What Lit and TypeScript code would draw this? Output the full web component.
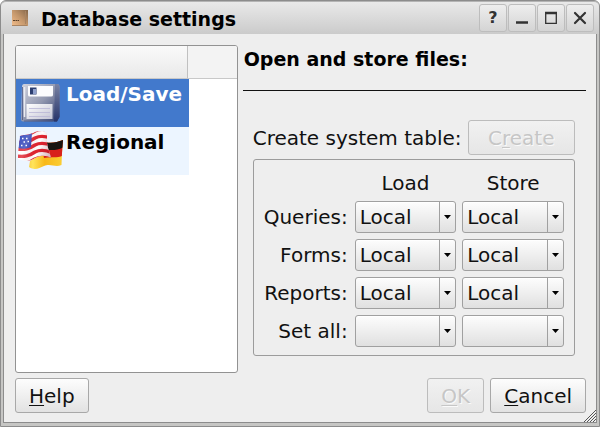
import { LitElement, html, css, svg, nothing } from "lit";
import { customElement, property, state } from "lit/decorators.js";
import { classMap } from "lit/directives/class-map.js";

const floppyIcon = html`
  <svg class="icon" viewBox="0 0 48 48" aria-hidden="true">
    <defs>
      <linearGradient id="body" x1="0" y1="0" x2="1" y2="1">
        <stop offset="0" stop-color="#d2d5e0" />
        <stop offset="0.5" stop-color="#9298b0" />
        <stop offset="1" stop-color="#2b396b" />
      </linearGradient>
      <linearGradient id="label" x1="0" y1="0" x2="1" y2="1">
        <stop offset="0" stop-color="#ffffff" />
        <stop offset="1" stop-color="#c3c4d4" />
      </linearGradient>
      <linearGradient id="side" x1="0" y1="0" x2="0" y2="1">
        <stop offset="0" stop-color="#7a83a4" />
        <stop offset="1" stop-color="#26346a" />
      </linearGradient>
    </defs>
    <path d="M8 5H41Q43.500 5 43.500 8V38L41 42.500H7Q5 42.500 5 40L6 7Q6.500 5 8 5Z" fill="url(#body)" />
    <path d="M39 5H41Q43.500 5 43.500 8V38L41 42.500H38Z" fill="url(#side)" />
    <path d="M6.500 8V41M8 42H37" stroke="#4b5884" stroke-width="0.800" fill="none" />
    <path d="M8.500 8V38" stroke="#e9ebf2" stroke-width="1.500" fill="none" />
    <path d="M12 7H37V16Q37 17.500 35 17.500H14Q12 17.500 12 16Z" fill="#fcfcfe" />
    <path d="M14 8.500H20.500V15.500H14Z" fill="#2c3e70" />
    <path d="M17 10H20V15H17Z" fill="#8fa0cc" />
    <path d="M10.500 25H36.500V40H10.500Z" fill="url(#label)" />
    <path d="M13 29.500H34M13 33.500H34M13 37.500H34" stroke="#b9b6d6" stroke-width="0.800" fill="none" />
  </svg>
`;

const flagsIcon = html`
  <svg class="icon" viewBox="0 0 48 48" aria-hidden="true">
    <defs>
      <linearGradient id="gold" x1="0" y1="0" x2="1" y2="0">
        <stop offset="0" stop-color="#e2900c" />
        <stop offset="0.35" stop-color="#ffe45a" />
        <stop offset="0.6" stop-color="#f8b818" />
        <stop offset="1" stop-color="#fbd038" />
      </linearGradient>
      <linearGradient id="shine" x1="0" y1="0" x2="1" y2="0.300">
        <stop offset="0" stop-color="#ffffff" stop-opacity="0" />
        <stop offset="0.350" stop-color="#ffffff" stop-opacity="0.200" />
        <stop offset="0.650" stop-color="#7a0010" stop-opacity="0" />
        <stop offset="1" stop-color="#7a0010" stop-opacity="0.300" />
      </linearGradient>
      <clipPath id="germany">
        <path d="M29 15C36 17 41 15 47 13L46 26L45.500 38C39 41 35 36 28 39C23 41 19 44 13 40L14 34L27 26Z" />
      </clipPath>
      <clipPath id="usa">
        <path d="M4 9C11 7 14 8 19 5C24 3 28 4 31 6L31 16C32 22 34 26 35 31C30 28 25 28 19 31C13 35 8 34 2 32C2 26 3 17 4 9Z" />
      </clipPath>
    </defs>
    <g clip-path="url(#germany)">
      <rect y="10" width="48" height="36" fill="url(#gold)" />
      <path d="M24 10H48V28C41 32 35 29 28 31Z" fill="#d8211b" />
      <path d="M26 10H48V20C42 24 36 23 28 23Z" fill="#171310" />
    </g>
    <g clip-path="url(#usa)">
      <rect width="40" height="38" fill="#ffffff" />
      ${[2, 9, 16, 23, 30].map(
        (y) => svg`<path d="M0 ${y + 6}C9 ${y + 7} 13 ${y + 6} 19 ${y + 2}C25 ${y - 1} 30 ${y} 37 ${y + 3}" stroke="#df2430" stroke-width="3.400" fill="none" />`,
      )}
      <path d="M4 8C9 8 12 8 16 6L15 20C11 22 7 22 2 21Z" fill="#2f43ba" />
      <path d="M6 11.500H7.500M10 11.500H11.500M7.500 15H9M11.500 14.500H13M5 18.500H6.500M9.500 18.500H11" stroke="#ffffff" stroke-width="1.500" fill="none" />
      <rect width="40" height="38" fill="url(#shine)" />
    </g>
  </svg>
`;

@customElement("local-select")
class LocalSelect extends LitElement {
  @property() label = "";
  @property() value = "";

  static styles = css`
    :host {
      display: grid;
    }
    select,
    svg {
      grid-area: 1 / 1;
    }
    select {
      appearance: none;
      width: 100%;
      height: 32px;
      margin: 0;
      padding: 0 20px 0 4px;
      border: 1px solid #a0a0a0;
      border-radius: 3px;
      background: linear-gradient(#fdfdfd, #e0e0e0);
      box-shadow: inset 0 1px #ffffff;
      font: 20px "DejaVu Sans", sans-serif;
      color: #111;
    }
    svg {
      justify-self: end;
      width: 17px;
      height: 32px;
      pointer-events: none;
    }
  `;

  render() {
    return html`
      <select aria-label=${this.label}>
        ${this.value ? nothing : html`<option selected></option>`}
        <option ?selected=${this.value === "Local"}>Local</option>
        <option>Server</option>
      </select>
      <svg viewBox="0 0 17 32" aria-hidden="true">
        <path d="M0.500 1V31" stroke="#a0a0a0" />
        <path d="M5 14H12L8.500 18Z" fill="#000" />
      </svg>
    `;
  }
}

@customElement("app-root")
class DatabaseSettings extends LitElement {
  @state() private page = 0;

  private pages = [
    { name: "Load/Save", icon: floppyIcon },
    { name: "Regional", icon: flagsIcon },
  ];

  private rows = [
    { name: "Queries", value: "Local" },
    { name: "Forms", value: "Local" },
    { name: "Reports", value: "Local" },
    { name: "Set all", value: "" },
  ];

  static styles = css`
    :host {
      display: block;
      font: 20px/24px "DejaVu Sans", sans-serif;
      color: #111;
    }
    * {
      box-sizing: border-box;
    }
    button {
      margin: 0;
      font: inherit;
      color: inherit;
    }
    .window {
      display: flex;
      flex-direction: column;
      min-height: 100vh;
      border: 1px solid #8c8c8c;
      border-radius: 6px 6px 0 0;
      background: #c6c6c4;
    }
    .titlebar {
      display: flex;
      align-items: center;
      height: 33px;
      padding: 0 5px 0 11px;
      border-top: 1px solid #b4b4b4;
      border-radius: 5px 5px 0 0;
      background: linear-gradient(#e9e9e9, #cbcbcb);
    }
    .app-icon {
      width: 16px;
      height: 16px;
    }
    .title {
      flex: 1;
      margin: 0 0 0 13px;
      padding-top: 2px;
      font-size: 19px;
      color: #000;
    }
    .controls {
      display: flex;
      gap: 1px;
    }
    .control {
      display: grid;
      place-items: center;
      width: 28px;
      height: 28px;
      padding: 0;
      border: 1px solid #bdbdbd;
      border-radius: 3px;
      background: linear-gradient(#eeeeee, #d4d4d4);
      font-size: 16px;
      font-weight: bold;
      color: #333;
    }
    .control svg {
      width: 16px;
      height: 16px;
      fill: none;
      stroke: #333;
    }
    .body {
      flex: 1;
      display: flex;
      flex-direction: column;
      gap: 5px;
      margin: 0 2px 3px;
      padding: 11px 10px 9px 11px;
      border: solid #8c8c8c;
      border-width: 0 1px 1px;
      background: #eeeeee;
      position: relative;
    }
    .main {
      flex: 1;
      display: flex;
      gap: 5px;
    }
    .pages {
      flex: 0 0 39%;
      border: 1px solid #929292;
      border-radius: 3px;
      background: #fff;
      overflow: hidden;
    }
    .pages-head {
      height: 33px;
      border-bottom: 1px solid #c8c8c8;
      background: #f3f3f3;
    }
    .column-head {
      width: 172px;
      height: 32px;
      border-right: 1px solid #c0c0c0;
      background: linear-gradient(#fafafa, #e9e9e9);
    }
    .page {
      display: flex;
      gap: 2px;
      width: 173px;
      height: 48px;
      padding: 0;
      border: 0;
      background: #ecf5ff;
      font-weight: bold;
      color: #000;
      white-space: nowrap;
    }
    .page-name {
      padding-top: 3px;
    }
    .page.current {
      background: #4279cc;
      color: #fff;
    }
    .icon {
      flex: none;
      width: 48px;
      height: 48px;
    }
    .panel {
      flex: 1;
      min-width: 0;
    }
    .heading {
      margin: 0;
      padding: 2px 0 18px 1px;
      border-bottom: 1px solid #111;
      font-size: 19px;
      line-height: 25px;
      color: #000;
    }
    .settings {
      padding: 29px 11px 0 10px;
    }
    .create {
      display: flex;
      align-items: center;
      margin-bottom: 4px;
      white-space: nowrap;
    }
    .push {
      height: 35px;
      padding: 0 13px;
      border: 1px solid #a8a8a8;
      border-radius: 3px;
      background: linear-gradient(#fdfdfd, #e2e2e2);
      white-space: nowrap;
    }
    .push:disabled {
      border-color: #bcbcbc;
      background: linear-gradient(#f1f1f1, #e6e6e6);
      color: #c6c6c6;
      text-shadow: 1px 1px #fafafa;
    }
    .create .push {
      flex: 1;
      margin-left: 6px;
      padding: 0;
    }
    .key {
      text-decoration: underline;
      text-decoration-thickness: 1px;
      text-underline-offset: 2px;
    }
    .group {
      display: grid;
      grid-template-columns: auto minmax(0, 1fr) minmax(0, 1fr);
      gap: 6px;
      align-items: center;
      margin: 0;
      padding: 11px 10px 8px;
      border: 1px solid #9c9c9c;
      border-radius: 3px;
    }
    .column {
      text-align: center;
    }
    .row-name {
      padding-right: 1px;
      text-align: right;
      white-space: nowrap;
    }
    .footer {
      display: flex;
      gap: 6px;
    }
    .spacer {
      flex: 1;
    }
    .grip {
      position: absolute;
      right: 0;
      bottom: 0;
      width: 12px;
      height: 12px;
    }
  `;

  render() {
    return html`
      <div class="window">
        <header class="titlebar">
          <svg class="app-icon" viewBox="0 0 16 16" aria-hidden="true">
            <defs>
              <linearGradient id="wood" x1="1" y1="0" x2="0" y2="1">
                <stop offset="0" stop-color="#846649" />
                <stop offset="0.500" stop-color="#c4976c" />
                <stop offset="1" stop-color="#f3bd8a" />
              </linearGradient>
            </defs>
            <rect width="16" height="16" fill="url(#wood)" />
            <path d="M13.500 1V14M0 15.500H15" stroke="#a88462" />
            <path d="M1 10.500H7" stroke="#5a4028" stroke-dasharray="2 0.500" />
          </svg>
          <h1 class="title">Database settings</h1>
          <div class="controls">
            <button class="control" aria-label="What's this">?</button>
            <button class="control" aria-label="Minimize">
              <svg viewBox="0 0 16 16"><path d="M2 12.500H14" stroke-width="2.500" /></svg>
            </button>
            <button class="control" aria-label="Maximize">
              <svg viewBox="0 0 16 16">
                <path d="M2.700 3V13.300H13.300V3" stroke-width="1.300" />
                <path d="M2 3H14" stroke-width="2.500" />
              </svg>
            </button>
            <button class="control" aria-label="Close">
              <svg viewBox="0 0 16 16"><path d="M3 3L13 13M13 3L3 13" stroke-width="2.200" stroke-linecap="round" /></svg>
            </button>
          </div>
        </header>

        <div class="body">
          <div class="main">
            <nav class="pages">
              <div class="pages-head"><div class="column-head"></div></div>
              ${this.pages.map(
                (page, i) => html`
                  <button
                    class=${classMap({ page: true, current: i === this.page })}
                    @click=${() => (this.page = i)}
                  >
                    ${page.icon}<span class="page-name">${page.name}</span>
                  </button>
                `,
              )}
            </nav>

            <section class="panel">
              <h2 class="heading">Open and store files:</h2>
              <div class="settings">
                <div class="create">
                  <label for="create">Create system table:</label>
                  <button id="create" class="push" disabled>C<span class="key">r</span>eate</button>
                </div>
                <div class="group" role="group">
                  <span></span>
                  <span class="column">Load</span>
                  <span class="column">Store</span>
                  ${this.rows.map(
                    (row) => html`
                      <span class="row-name">${row.name}:</span>
                      <local-select label="${row.name}: Load" value=${row.value}></local-select>
                      <local-select label="${row.name}: Store" value=${row.value}></local-select>
                    `,
                  )}
                </div>
              </div>
            </section>
          </div>

          <footer class="footer">
            <button class="push"><span class="key">H</span>elp</button>
            <span class="spacer"></span>
            <button class="push" disabled><span class="key">O</span>K</button>
            <button class="push"><span class="key">C</span>ancel</button>
          </footer>
          <svg class="grip" viewBox="0 0 12 12" aria-hidden="true">
            <path d="M0 12L12 0M3 12L12 3M6 12L12 6M9 12L12 9" stroke="#555" fill="none" />
          </svg>
        </div>
      </div>
    `;
  }
}
